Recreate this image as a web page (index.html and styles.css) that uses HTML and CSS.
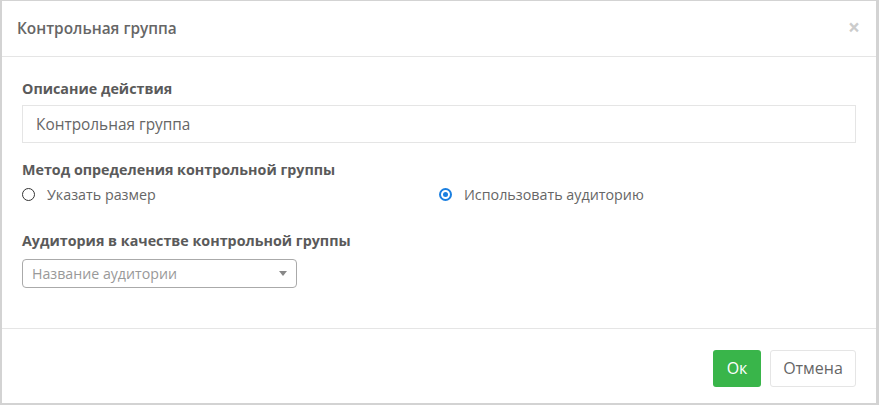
FILE: index.html
```html
<!DOCTYPE html>
<html lang="ru">
<head>
<meta charset="utf-8">
<link rel="stylesheet" href="styles.css">
</head>
<body>
<div class="modal">
  <div class="modal-header">
    <h4 class="modal-title">Контрольная группа</h4>
    <span class="close">×</span>
  </div>
  <div class="modal-body">
    <div class="field">
      <label class="field-label">Описание действия</label>
      <div class="text-input">Контрольная группа</div>
    </div>
    <div class="field field-method">
      <label class="field-label">Метод определения контрольной группы</label>
      <div class="radio-row">
        <div class="radio"><span class="radio-dot"></span><span class="radio-text">Указать размер</span></div>
        <div class="radio"><span class="radio-dot checked"></span><span class="radio-text">Использовать аудиторию</span></div>
      </div>
    </div>
    <div class="field field-audience">
      <label class="field-label">Аудитория в качестве контрольной группы</label>
      <div class="select">
        <span class="select-placeholder">Название аудитории</span>
        <span class="select-arrow"></span>
      </div>
    </div>
  </div>
  <div class="modal-footer">
    <button class="btn btn-ok">Ок</button>
    <button class="btn btn-cancel">Отмена</button>
  </div>
</div>
</body>
</html>
```

FILE: styles.css
```css
html, body {
  margin: 0;
  padding: 0;
}
body {
  background: #d3d3d3;
  width: 879px;
  height: 405px;
  box-sizing: border-box;
  padding: 1px 3px 2px 2px;
  font-family: "Open Sans", "Noto Sans", sans-serif;
  color: #555;
}
.modal {
  background: #fff;
  height: 402px;
  display: flex;
  flex-direction: column;
}
.modal-header {
  height: 55px;
  flex: none;
  border-bottom: 1px solid #e5e5e5;
  display: flex;
  align-items: center;
  justify-content: space-between;
  padding: 0 16px 0 15px;
}
.modal-title {
  margin: 0;
  font-size: 15.4px;
  font-weight: 600;
  color: #666;
}
.close {
  font-size: 21px;
  font-weight: 700;
  color: #ccc;
  line-height: 1;
  margin-top: -2px;
}
.modal-body {
  flex: 1;
  padding: 22px 20px 0 20px;
  border-bottom: 1px solid #e5e5e5;
}
.field-label {
  display: block;
  font-size: 14.3px;
  font-weight: 700;
  color: #5a5a5a;
  line-height: 20px;
}
.text-input {
  margin-top: 6px;
  height: 38px;
  box-sizing: border-box;
  border: 1px solid #e5e5e5;
  padding: 0 13px;
  display: flex;
  align-items: center;
  font-size: 15.4px;
  color: #666;
}
.field-method {
  margin-top: 17px;
}
.radio-row {
  display: grid;
  grid-template-columns: 1fr 1fr;
  margin-top: 3px;
}
.radio {
  display: flex;
  align-items: center;
  height: 22px;
}
.radio-dot {
  width: 11px;
  height: 11px;
  border: 1px solid #333;
  border-radius: 50%;
  margin-right: 12px;
  box-sizing: content-box;
}
.radio-dot.checked {
  border: 2px solid #1a7fe0;
  width: 5px;
  height: 5px;
  padding: 2px;
  background: #1a7fe0;
  background-clip: content-box;
}
.radio-text {
  font-size: 14.3px;
  color: #666;
}
.field-audience {
  margin-top: 26px;
}
.select {
  margin-top: 8px;
  width: 275px;
  height: 29px;
  box-sizing: border-box;
  border: 1px solid #aaa;
  border-radius: 4px;
  display: flex;
  align-items: center;
  justify-content: space-between;
  padding: 0 9px 0 9px;
}
.select-placeholder {
  font-size: 14.2px;
  color: #999;
}
.select-arrow {
  width: 0;
  height: 0;
  border-left: 4px solid transparent;
  border-right: 4px solid transparent;
  border-top: 5px solid #888;
}
.modal-footer {
  height: 74px;
  flex: none;
  box-sizing: border-box;
  display: flex;
  align-items: center;
  justify-content: flex-end;
  gap: 9px;
  padding: 4px 20px 0 20px;
}
.btn {
  font-family: "Open Sans", "Noto Sans", sans-serif;
  font-size: 16px;
  height: 37px;
  border-radius: 3px;
  border: 1px solid transparent;
  padding: 0;
  cursor: pointer;
}
.btn-ok {
  background: #39b54a;
  color: #fff;
  width: 48px;
}
.btn-cancel {
  background: #fff;
  border-color: #e5e5e5;
  color: #666;
  width: 86px;
}
```
